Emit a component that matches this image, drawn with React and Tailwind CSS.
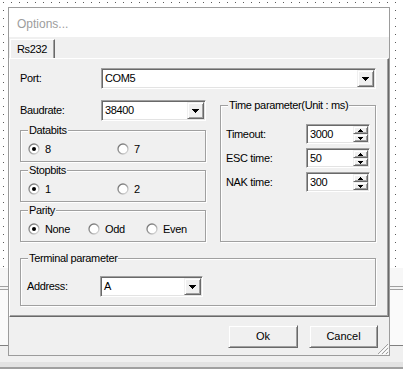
import React from 'react';

// classic win32 bevels
const sunken =
  'border border-t-[#a0a0a0] border-l-[#a0a0a0] border-r-white border-b-white shadow-[inset_1px_1px_0_#696969,inset_-1px_-1px_0_#e3e3e3] bg-white';
const raised =
  'border border-t-[#f0f0f0] border-l-[#f0f0f0] border-r-[#696969] border-b-[#696969] shadow-[inset_1px_1px_0_#fff,inset_-1px_-1px_0_#a0a0a0] bg-[#f0f0f0]';

function Triangle({ up = false, size = 7 }) {
  const rows = [];
  for (let i = 0; i < Math.ceil(size / 2); i++) {
    const w = size - i * 2;
    rows.push(<rect key={i} x={i} y={up ? Math.ceil(size / 2) - 1 - i : i} width={w} height="1" />);
  }
  return (
    <svg width={size} height={Math.ceil(size / 2)} fill="#000" shapeRendering="crispEdges">
      {rows}
    </svg>
  );
}

function Combo({ value, className }) {
  return (
    <div className={`flex h-[21px] p-px ${sunken} ${className}`}>
      <div className="flex flex-1 items-center pl-[2px]">{value}</div>
      <div className={`flex h-full w-[17px] items-center justify-center ${raised}`}>
        <Triangle />
      </div>
    </div>
  );
}

function Spin({ value }) {
  return (
    <div className={`flex h-[20px] w-[64px] p-px ${sunken}`}>
      <div className="flex flex-1 items-center pl-[2px]">{value}</div>
      <div className="flex w-[15px] flex-col">
        <div className={`flex flex-1 items-center justify-center ${raised}`}>
          <Triangle up size={5} />
        </div>
        <div className={`flex flex-1 items-center justify-center ${raised}`}>
          <Triangle size={5} />
        </div>
      </div>
    </div>
  );
}

function RadioDot({ checked }) {
  return (
    <svg width="12" height="12" viewBox="0 0 12 12">
      <defs>
        <linearGradient id="ring" x1="0" y1="0" x2="1" y2="1">
          <stop offset="0" stopColor="#6a6a6a" />
          <stop offset="0.5" stopColor="#9a9a9a" />
          <stop offset="1" stopColor="#e8e8e8" />
        </linearGradient>
      </defs>
      <circle cx="6" cy="6" r="5" fill="#fff" stroke="url(#ring)" strokeWidth="1.3" />
      {checked && <circle cx="6" cy="6" r="2" fill="#000" />}
    </svg>
  );
}

function Radio({ label, checked, className = '' }) {
  return (
    <div className={`flex items-center ${className}`}>
      <RadioDot checked={checked} />
      <span className="ml-[5px]">{label}</span>
    </div>
  );
}

function Group({ label, className = '', children }) {
  return (
    <div className={`relative border border-[#a0a0a0] shadow-[inset_1px_1px_0_#fff,1px_1px_0_#fff] ${className}`}>
      <span className="absolute left-[7px] top-[-8px] bg-[#f0f0f0] px-px leading-[14px]">{label}</span>
      {children}
    </div>
  );
}

function Backdrop() {
  return (
    <div className="absolute inset-x-0 top-[268px] bottom-0 flex flex-col">
      <div className="h-[18px] bg-[#f7f7f7]" />
      <div className="h-px bg-[#a0a0a0]" />
      <div className="h-[2px] bg-[#f4f4f4]" />
      <div className="h-px bg-[#a0a0a0]" />
      <div className="h-[55px] bg-[#fafafa]" />
      <div className="h-px bg-[#808080]" />
      <div className="h-[16px] bg-[#f0f0f0]" />
      <div className="h-[5px] bg-[#e3e3e3]" />
      <div className="h-[2px] bg-[#a0a0a0]" />
      <div className="flex-1 bg-white" />
    </div>
  );
}

function Dialog() {
  const times = [
    { label: 'Timeout:', value: '3000' },
    { label: 'ESC time:', value: '50' },
    { label: 'NAK time:', value: '300' },
  ];

  return (
    <div className="relative flex w-[382px] flex-col border border-[#9c9c9c] bg-[#f0f0f0]">
      <div className="flex h-[29px] items-center bg-white pl-[8px] pt-[3px] text-[12px] tracking-normal text-[#9d9d9d]">
        Options...
      </div>

      {/* tab strip */}
      <div className="flex h-[21px] items-end pl-px">
        <div className="flex h-[19px] w-[45px] items-center border-l border-r border-t border-l-white border-r-[#696969] border-t-white pl-[6px] shadow-[inset_-1px_0_0_#a0a0a0]">
          Rs232
        </div>
      </div>

      {/* tab page */}
      <div className="flex flex-col border-b border-l border-r border-t border-b-[#696969] border-l-white border-r-[#696969] border-t-white pb-[10px] pl-[10px] pt-[9px] shadow-[inset_-1px_-1px_0_#a0a0a0]">
        <div className="flex h-[21px] items-center">
          <span className="w-[81px]">Port:</span>
          <Combo value="COM5" className="w-[275px]" />
        </div>

        <div className="mt-[11px] flex">
          <div className="flex w-[186px] flex-col">
            <div className="flex h-[21px] items-center">
              <span className="w-[81px]">Baudrate:</span>
              <Combo value="38400" className="w-[105px]" />
            </div>
            <Group label="Databits" className="mt-[9px] flex h-[32px] items-center pl-[7px] pt-[6px]">
              <Radio label="8" checked className="w-[89px]" />
              <Radio label="7" />
            </Group>
            <Group label="Stopbits" className="mt-[8px] flex h-[32px] items-center pl-[7px] pt-[6px]">
              <Radio label="1" checked className="w-[89px]" />
              <Radio label="2" />
            </Group>
            <Group label="Parity" className="mt-[8px] flex h-[32px] items-center pl-[7px] pt-[6px]">
              <Radio label="None" checked className="w-[60px]" />
              <Radio label="Odd" className="w-[58px]" />
              <Radio label="Even" />
            </Group>
          </div>

          <Group label="Time parameter(Unit : ms)" className="ml-[14px] mt-[5px] h-[137px] w-[156px] pl-[5px] pt-[18px]">
            <div className="flex flex-col gap-[4px]">
              {times.map((t) => (
                <div key={t.label} className="flex h-[20px] items-center">
                  <span className="w-[80px]">{t.label}</span>
                  <Spin value={t.value} />
                </div>
              ))}
            </div>
          </Group>
        </div>

        <Group label="Terminal parameter" className="mt-[16px] h-[48px] w-[356px] pl-[6px] pt-[17px]">
          <div className="flex h-[21px] items-center">
            <span className="w-[73px]">Address:</span>
            <Combo value="A" className="w-[103px]" />
          </div>
        </Group>
      </div>

      {/* buttons */}
      <div className="flex h-[38px] justify-end gap-[11px] pr-[11px] pt-[8px]">
        <button className={`h-[23px] w-[70px] ${raised} tracking-normal`}>Ok</button>
        <button className={`h-[23px] w-[69px] ${raised} tracking-normal`}>Cancel</button>
      </div>

      <svg className="absolute bottom-0 right-0" width="12" height="12" viewBox="0 0 12 12">
        <g strokeWidth="1" shapeRendering="crispEdges">
          <path d="M11 1L1 11M11 5L5 11M11 9L9 11" stroke="#a0a0a0" />
          <path d="M12 2L2 12M12 6L6 12M12 10L10 12" stroke="#fff" />
        </g>
      </svg>
    </div>
  );
}

export default function App() {
  return (
    <div className="relative h-[379px] w-[403px] overflow-hidden bg-white bg-[image:conic-gradient(at_1px_1px,transparent_75%,#5a5a5a_0)] bg-[length:8px_8px] bg-[position:3px_2px] pl-[8px] pt-[7px] font-['Liberation_Sans',Arial,sans-serif] text-[11px] tracking-[-0.35px] text-black">
      <Backdrop />
      <Dialog />
    </div>
  );
}
